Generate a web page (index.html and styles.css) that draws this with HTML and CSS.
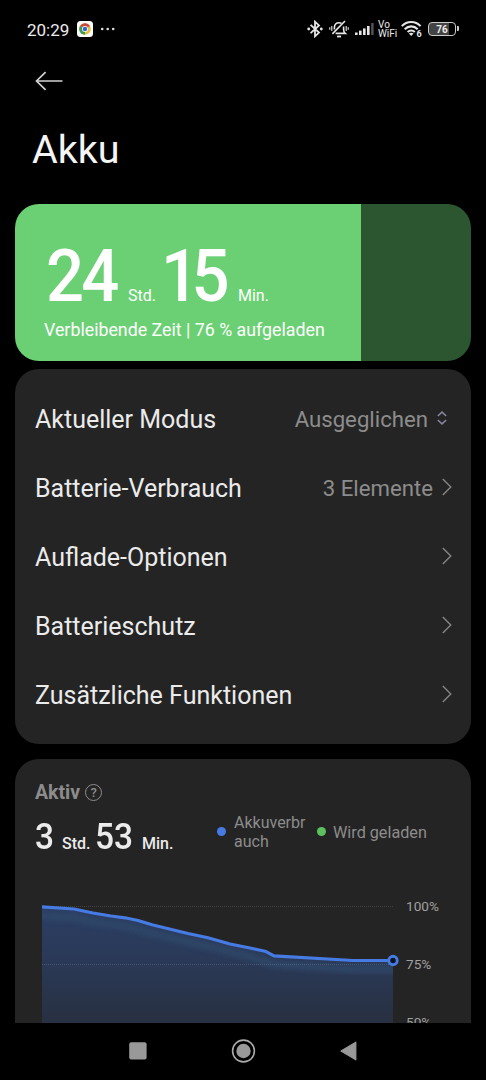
FILE: index.html
```html
<!DOCTYPE html>
<html lang="de">
<head>
  <meta charset="UTF-8">
  <meta name="viewport" content="width=device-width, initial-scale=1.0">
  <title>Akku</title>
  <link rel="stylesheet" href="styles.css">
</head>
<body>
  <div class="screen">
    <div class="status-bar">
      <span class="time">20:29</span>
      <svg class="chrome" width="16" height="16" viewBox="0 0 16 16">
        <rect width="16" height="16" rx="3.5" fill="#fff"/>
        <circle cx="8" cy="8" r="5.8" fill="#e8c13c"/>
        <path d="M8 8 L2.98 5.1 A5.8 5.8 0 0 1 13.02 5.1 Z" fill="#c94a3d"/>
        <path d="M8 8 L2.98 5.1 A5.8 5.8 0 0 0 8 13.8 Z" fill="#3f9a5a"/>
        <circle cx="8" cy="8" r="2.9" fill="#fff"/>
        <circle cx="8" cy="8" r="2.2" fill="#3567c8"/>
      </svg>
      <svg class="more" width="16" height="4" viewBox="0 0 16 4" fill="#ddd">
        <circle cx="2.2" cy="2" r="1.3"/><circle cx="7.7" cy="2" r="1.3"/><circle cx="13.2" cy="2" r="1.3"/>
      </svg>

      <div class="status-icons">
        <svg class="bluetooth" width="16" height="18" viewBox="0 0 16 18" fill="none" stroke="#e6e6e6" stroke-width="1.8">
          <path d="M3.6 4.8 L12 12.6 L8 16.3 V1.7 L12 5.4 L3.6 13.2"/>
          <circle cx="1.7" cy="9" r="1.4" fill="#e6e6e6" stroke="none"/>
          <circle cx="14.3" cy="9" r="1.4" fill="#e6e6e6" stroke="none"/>
        </svg>
        <svg class="bell" width="20" height="18" viewBox="0 0 20 18" fill="none" stroke="#e6e6e6" stroke-width="1.6">
          <path d="M5.4 9.4 V7.4 C5.4 4.6 7.2 2.8 10 2.8 C11 2.8 11.9 3 12.6 3.4 M14.6 6.6 V9.5 C14.6 11.6 15.2 12.6 16.2 13.4 H6.6"/>
          <path d="M16 1 L3.4 13.9"/>
          <path d="M8 16.5 H12" stroke-width="1.8"/>
          <path d="M2.8 6 V11 M.8 7.2 V9.8 M17.2 6 V11 M19.2 7.2 V9.8" stroke-width="1.1"/>
        </svg>
        <svg class="signal" width="20" height="14" viewBox="0 0 20 14" fill="#e6e6e6">
          <rect x="0" y="10.5" width="2.6" height="2.5"/>
          <rect x="4" y="8.6" width="2.6" height="4.4"/>
          <rect x="8" y="6.4" width="2.6" height="6.6"/>
          <rect x="12" y="4" width="2.6" height="9"/>
          <rect x="16.2" y="1" width="2.4" height="12" fill="#555"/>
        </svg>
        <span class="vowifi">Vo<br>WiFi</span>
        <svg class="wifi" width="21" height="20" viewBox="0 0 21 20" fill="none" stroke="#e6e6e6" stroke-width="2.1">
          <path d="M.8 7.1 C6 1.6 14.4 1.6 19.6 7.1"/>
          <path d="M3.7 10.2 C7.4 6.4 13 6.4 16.7 10.2"/>
          <path d="M6.6 13.1 C8.8 10.9 11.6 10.9 13.8 13.1"/>
          <path d="M10.2 17 L7.8 14.6 Q10.2 12.8 12.6 14.6 Z" fill="#e6e6e6" stroke="none"/>
          <text x="15.4" y="18" class="wifi-six">6</text>
        </svg>
        <div class="battery"><span>76</span></div>
      </div>
    </div>

    <div class="header">
      <svg width="28" height="20" viewBox="0 0 28 20" fill="none" stroke="#d2d2d2" stroke-width="1.7">
        <path d="M27.5 10 H1.5 M10.6 1.1 L1.5 10 L10.6 18.9"/>
      </svg>
      <h1>Akku</h1>
    </div>

    <div class="charge-card">
      <div class="charge-time">
        <span class="big">24</span><span class="unit">Std.</span><span class="big second"><span class="one">1</span>5</span><span class="unit">Min.</span>
      </div>
      <p>Verbleibende Zeit | 76 % aufgeladen</p>
    </div>

    <div class="card menu">
      <div class="row">
        <span>Aktueller Modus</span>
        <span class="value">Ausgeglichen</span>
        <svg class="updown" width="10" height="14" viewBox="0 0 10 14" fill="none" stroke="#8585a0" stroke-width="1.5">
          <path d="M.8 5 L5 1.1 L9.2 5 M.8 9 L5 12.9 L9.2 9"/>
        </svg>
      </div>
      <div class="row">
        <span>Batterie-Verbrauch</span>
        <span class="value">3 Elemente</span>
        <svg class="chevron" viewBox="0 0 10 18"><path d="M.8 1 L8.8 9 L.8 17"/></svg>
      </div>
      <div class="row">
        <span>Auflade-Optionen</span>
        <svg class="chevron" viewBox="0 0 10 18"><path d="M.8 1 L8.8 9 L.8 17"/></svg>
      </div>
      <div class="row">
        <span>Batterieschutz</span>
        <svg class="chevron" viewBox="0 0 10 18"><path d="M.8 1 L8.8 9 L.8 17"/></svg>
      </div>
      <div class="row">
        <span>Zusätzliche Funktionen</span>
        <svg class="chevron" viewBox="0 0 10 18"><path d="M.8 1 L8.8 9 L.8 17"/></svg>
      </div>
    </div>

    <div class="card usage">
      <div class="usage-title">
        <span>Aktiv</span>
        <span class="help">?</span>
      </div>
      <div class="usage-info">
        <div class="active-time">
          <span class="num">3</span><span class="unit">Std.</span><span class="num second">53</span><span class="unit">Min.</span>
        </div>
        <div class="legend">
          <i class="dot blue"></i><span class="legend-use">Akkuverbrauch</span>
          <i class="dot green"></i><span>Wird geladen</span>
        </div>
      </div>
      <div class="chart">
        <svg width="360" height="130" viewBox="0 0 360 130">
          <defs>
            <linearGradient id="fill" x1="0" y1="0" x2="0" y2="1">
              <stop offset="0" stop-color="#2b3f66"/>
              <stop offset="0.5" stop-color="#2a3957"/>
              <stop offset="1" stop-color="#283040"/>
            </linearGradient>
            <clipPath id="area">
              <path d="M0 10.5 L32 12.5 L51 16.5 L69 19.5 L83 21.3 L96 24 L110 28.5 L146 37 L166 41.5 L188 47.5 L208 51.7 L223 55 L232 59.5 L311 64.3 H351 V130 H0 Z"/>
            </clipPath>
            <filter id="soft"><feGaussianBlur stdDeviation="2.5"/></filter>
          </defs>
          <path class="grid" d="M0 10.5 H351"/>
          <g clip-path="url(#area)">
            <rect width="351" height="130" fill="url(#fill)"/>
            <path class="glow" d="M-10 20 L32 21.5 L51 25.5 L83 30.3 L110 37.5 L166 50.5 L208 60.7 L232 68.5 L311 73.3 H360"/>
          </g>
          <path class="grid" d="M0 68.5 H351"/>
          <path class="line" d="M0 10.8 L32 13 L51 17 L69 20 L83 21.8 L96 24.5 L110 28.7 L146 37.5 L166 41.8 L188 48 L208 52 L223 55.2 L232 59.8 L311 64.5 H351"/>
          <circle cx="351" cy="64.5" r="4.2" fill="#0d1422" stroke="#467be4" stroke-width="2.9"/>
        </svg>
        <div class="labels">
          <span>100%</span>
          <span>75%</span>
          <span>50%</span>
        </div>
      </div>
    </div>

    <div class="nav-bar">
      <svg width="18" height="18" viewBox="0 0 18 18"><rect x=".2" y=".2" width="17.4" height="17.4" rx="2" fill="#999"/></svg>
      <svg width="26" height="26" viewBox="0 0 26 26">
        <circle cx="12.5" cy="13" r="10.9" fill="none" stroke="#aaa" stroke-width="1.6"/>
        <circle cx="12.5" cy="13" r="7.2" fill="#999"/>
      </svg>
      <svg width="18" height="20" viewBox="0 0 18 20"><path d="M1 10 L15.8 1.2 V18.8 Z" fill="#999" stroke="#999" stroke-width="1.2" stroke-linejoin="round"/></svg>
    </div>
  </div>
</body>
</html>
```
FILE: styles.css
```css
* {
  box-sizing: border-box;
  margin: 0;
  padding: 0;
}

body {
  background: #000;
  color: #ebebeb;
  font-family: Roboto, "Liberation Sans", sans-serif;
}

svg {
  display: block;
  flex-shrink: 0;
}

.screen {
  width: 486px;
  height: 1080px;
  display: flex;
  flex-direction: column;
  overflow: hidden;
}

/* status bar */
.status-bar {
  height: 58px;
  padding: 0 27px 0 27px;
  display: flex;
  align-items: center;
}

.time {
  width: 50px;
  padding-top: 2px;
  font-size: 17px;
  line-height: 20px;
}

.more {
  margin-left: 7px;
}

.status-icons {
  margin-left: auto;
  display: flex;
  align-items: center;
}

.bell {
  margin-left: 6px;
}

.signal {
  margin-left: 6px;
}

.vowifi {
  width: 22px;
  margin-left: 3px;
  font-size: 10px;
  line-height: 9px;
}

.wifi {
  margin-left: 1px;
  overflow: visible;
}

.wifi-six {
  font-size: 9px;
  font-weight: 700;
  fill: #e6e6e6;
  stroke: none;
}

.battery {
  position: relative;
  width: 28px;
  height: 14px;
  margin-left: 6px;
  margin-right: 3px;
  border: 1.5px solid #ccc;
  border-radius: 4px;
  background: linear-gradient(90deg, #444 76%, #000 76%);
  font-size: 10px;
  font-weight: 700;
  line-height: 13px;
  text-align: center;
}

.battery::after {
  content: "";
  position: absolute;
  right: -4px;
  top: 3px;
  width: 2px;
  height: 5px;
  border-radius: 0 1px 1px 0;
  background: #ccc;
}

/* title */
.header {
  height: 146px;
  padding: 13px 0 0 35px;
}

.header h1 {
  margin: 34px 0 0 -3px;
  font-size: 39.5px;
  line-height: 50px;
  font-weight: 400;
  color: #f5f5f5;
}

/* charge level */
.charge-card {
  height: 157px;
  margin: 0 15px 8px;
  padding: 34px 0 0 29px;
  border-radius: 24px;
  background: linear-gradient(90deg, #6bd074 346px, #2c562f 346px);
  color: #fff;
  flex-shrink: 0;
}

.charge-time {
  display: flex;
  align-items: baseline;
  height: 79px;
  line-height: 77px;
}

.big {
  width: 82px;
  margin-left: 2px;
  font-size: 72px;
  font-weight: 500;
  letter-spacing: -3px;
  transform: scaleX(0.93);
  transform-origin: left;
}

.big.second {
  width: 77px;
  margin-left: 1px;
}

.one {
  letter-spacing: -8px;
}

.charge-time .unit {
  width: 32px;
  font-size: 16px;
}

.charge-card p {
  font-size: 17.8px;
  line-height: 26px;
  white-space: nowrap;
}

/* cards */
.card {
  margin: 0 15px;
  border-radius: 24px;
  background: #242424;
  flex-shrink: 0;
}

.menu {
  height: 375px;
  padding: 15px 19px 0 20px;
}

.row {
  height: 69px;
  display: flex;
  align-items: center;
  font-size: 25px;
}

.row span {
  padding-top: 1px;
}

.row span:first-child {
  margin-right: auto;
}

.row .value {
  font-size: 22.2px;
  color: #8c8c8c;
}

.updown {
  margin: 0 5px 2px 9px;
}

.chevron {
  width: 10px;
  height: 18px;
  margin: 0 0 2px 9px;
  fill: none;
  stroke: #858585;
  stroke-width: 1.4;
}

/* usage */
.usage {
  height: 264px;
  margin-top: 15px;
  padding: 20px 0 0 20px;
  border-radius: 24px 24px 0 0;
  overflow: hidden;
}

.usage-title {
  display: flex;
  align-items: center;
  height: 26px;
  font-size: 19.5px;
  font-weight: 700;
  color: #8c8c8c;
}

.help {
  width: 17px;
  height: 17px;
  margin-left: 5px;
  border: 1.4px solid #8c8c8c;
  border-radius: 50%;
  font-size: 13px;
  font-weight: 500;
  line-height: 15px;
  text-align: center;
}

.usage-info {
  display: flex;
  height: 91px;
}

.active-time {
  width: 182px;
  height: 60px;
  padding-top: 2px;
  display: flex;
  align-items: baseline;
  line-height: 60px;
  font-weight: 500;
}

.num {
  width: 27px;
  font-size: 36px;
  transform: scaleX(0.93);
  transform-origin: left;
}

.num.second {
  width: 47px;
}

.active-time .unit {
  width: 33px;
  font-size: 16px;
}

.legend {
  display: flex;
  align-items: center;
  height: 54px;
  font-size: 16px;
  line-height: 19px;
  color: #8c8c8c;
}

.dot {
  width: 9px;
  height: 9px;
  margin-bottom: 2px;
  border-radius: 50%;
}

.blue {
  background: #467be4;
}

.green {
  background: #5cc05f;
}

.legend-use {
  width: 74px;
  margin: 0 9px 0 8px;
  word-break: break-all;
}

.green + span {
  margin-left: 7px;
  font-size: 16.2px;
}

/* chart */
.chart {
  display: flex;
  padding-left: 7px;
}

.grid {
  stroke: #fff;
  stroke-opacity: 0.14;
  stroke-dasharray: 1 1;
}

.line {
  fill: none;
  stroke: #467be4;
  stroke-width: 3.2;
  stroke-linejoin: round;
}

.glow {
  fill: none;
  stroke: #2e4667;
  stroke-width: 7;
  filter: url(#soft);
}

.labels {
  margin-left: 4px;
  padding-top: 1px;
  display: flex;
  flex-direction: column;
}

.labels span {
  height: 58px;
  font-size: 13.6px;
  line-height: 19px;
  color: #a0a0a0;
}

/* navigation */
.nav-bar {
  height: 57px;
  padding: 0 128px 2px 129px;
  display: flex;
  align-items: center;
  justify-content: space-between;
  background: #000;
}
```
